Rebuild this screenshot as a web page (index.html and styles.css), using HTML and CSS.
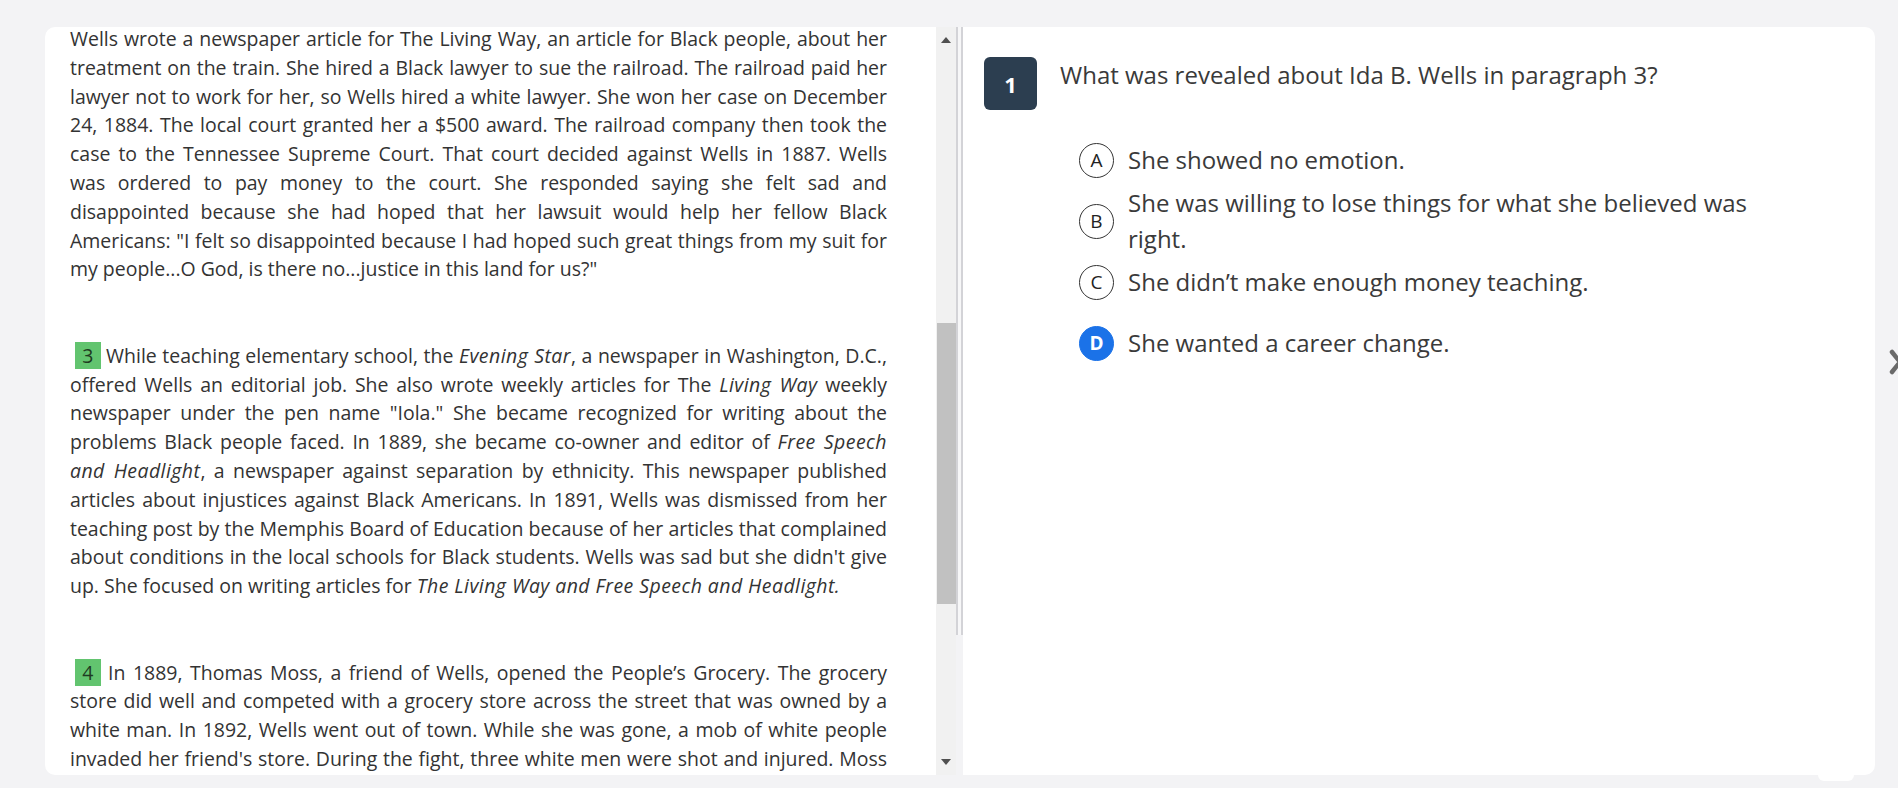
FILE: index.html
```html
<!DOCTYPE html>
<html lang="en">
<head>
<meta charset="utf-8">
<title>Reading question</title>
<link rel="stylesheet" href="styles.css">
</head>
<body>
<div class="app">
  <section class="passage-panel">
    <div class="passage-scroll">
      <div class="passage-content">
        <p class="para">Wells wrote a newspaper article for The Living Way, an article for Black people, about her treatment on the train. She hired a Black lawyer to sue the railroad. The railroad paid her lawyer not to work for her, so Wells hired a white lawyer. She won her case on December 24, 1884. The local court granted her a $500 award. The railroad company then took the case to the Tennessee Supreme Court. That court decided against Wells in 1887. Wells was ordered to pay money to the court. She responded saying she felt sad and disappointed because she had hoped that her lawsuit would help her fellow Black Americans: "I felt so disappointed because I had hoped such great things from my suit for my people...O God, is there no...justice in this land for us?"</p>
        <p class="para"><span class="pnum">3</span> While teaching elementary school, the <em>Evening Star</em>, a newspaper in Washington, D.C., offered Wells an editorial job. She also wrote weekly articles for The <em>Living Way</em> weekly newspaper under the pen name "Iola." She became recognized for writing about the problems Black people faced. In 1889, she became co-owner and editor of <em>Free Speech and Headlight</em>, a newspaper against separation by ethnicity. This newspaper published articles about injustices against Black Americans. In 1891, Wells was dismissed from her teaching post by the Memphis Board of Education because of her articles that complained about conditions in the local schools for Black students. Wells was sad but she didn't give up. She focused on writing articles for <em>The Living Way and Free Speech and Headlight.</em></p>
        <p class="para"><span class="pnum">4</span> In 1889, Thomas Moss, a friend of Wells, opened the People’s Grocery. The grocery store did well and competed with a grocery store across the street that was owned by a white man. In 1892, Wells went out of town. While she was gone, a mob of white people invaded her friend's store. During the fight, three white men were shot and injured. Moss and two other Black men were arrested and taken to jail.</p>
      </div>
    </div>
    <div class="scrollbar">
      <div class="sb-btn"><span class="tri-up"></span></div>
      <div class="sb-track"><div class="sb-thumb"></div></div>
      <div class="sb-btn"><span class="tri-down"></span></div>
    </div>
  </section>
  <div class="divider"></div>
  <div class="question-col">
    <section class="question-panel">
      <div class="question-row">
        <div class="qnum">1</div>
        <div class="qtext">What was revealed about Ida B. Wells in paragraph 3?</div>
      </div>
      <ul class="options">
        <li class="option"><span class="letter">A</span><span class="otext">She showed no emotion.</span></li>
        <li class="option"><span class="letter">B</span><span class="otext">She was willing to lose things for what she believed was right.</span></li>
        <li class="option"><span class="letter">C</span><span class="otext">She didn’t make enough money teaching.</span></li>
        <li class="option selected"><span class="letter">D</span><span class="otext">She wanted a career change.</span></li>
      </ul>
    </section>
    <div class="panel-tab"></div>
  </div>
  <div class="nav-col">
    <svg class="chev" width="14" height="26" viewBox="0 0 14 26"><polyline points="3,3 11,13 3,23" fill="none" stroke="#6a6a6a" stroke-width="4.5" stroke-linecap="round" stroke-linejoin="round"/></svg>
  </div>
</div>
</body>
</html>
```
FILE: styles.css
```css
* { box-sizing: border-box; }
html, body { margin: 0; padding: 0; }
body {
  background: #f3f3f5;
  width: 1898px;
  height: 788px;
  overflow: hidden;
  font-family: "Open Sans", "Noto Sans", sans-serif;
  color: #333;
}
.app {
  display: flex;
  align-items: flex-start;
  height: 788px;
  padding: 27px 0 0 45px;
}
.passage-panel {
  width: 911px;
  height: 748px;
  background: #fff;
  border-radius: 10px 0 0 10px;
  display: flex;
  overflow: hidden;
  flex: none;
}
.passage-scroll {
  flex: 1;
  height: 100%;
  overflow: hidden;
  padding: 0 49px 0 25px;
}
.passage-content { margin-top: -2px; }
.para {
  margin: 0 0 57.6px;
  font-size: 19.48px;
  line-height: 28.8px;
  text-align: justify;
  color: #333;
}
.para em {
  font-style: italic;
  letter-spacing: 0.44px;
}
.pnum {
  background: #62c46f;
  color: #1f3b22;
  padding: 0 7.2px;
  margin-left: 5px;
}
.scrollbar {
  width: 20px;
  height: 100%;
  background: #f1f1f1;
  display: flex;
  flex-direction: column;
  flex: none;
}
.sb-btn {
  height: 26px;
  display: flex;
  align-items: center;
  justify-content: center;
  flex: none;
}
.tri-up, .tri-down {
  width: 0; height: 0;
  border-left: 5px solid transparent;
  border-right: 5px solid transparent;
}
.tri-up { border-bottom: 6px solid #505050; }
.tri-down { border-top: 6px solid #505050; }
.sb-track { flex: 1; }
.sb-thumb {
  margin-top: 270px;
  height: 281px;
  background: #c1c1c1;
  margin-left: 1px;
}
.divider {
  width: 7px;
  height: 608px;
  border-left: 2px solid #d3d3d7;
  border-right: 2px solid #d3d3d7;
  background: #f7f7f8;
  flex: none;
}
.question-col {
  width: 912px;
  display: flex;
  flex-direction: column;
  flex: none;
}
.question-panel {
  height: 748px;
  background: #fff;
  border-radius: 0 10px 10px 0;
  padding: 30px 0 0 21px;
}
.panel-tab {
  width: 36px;
  height: 6px;
  background: #fff;
  border-radius: 0 0 6px 6px;
  margin: 0 21px 0 auto;
}
.question-row {
  display: flex;
  align-items: flex-start;
  gap: 23px;
}
.qnum {
  width: 53px;
  height: 53px;
  border-radius: 6px;
  background: #2c3e50;
  color: #fff;
  font-weight: 700;
  font-size: 22px;
  display: flex;
  align-items: center;
  justify-content: center;
  flex: none;
}
.qtext {
  font-size: 24px;
  line-height: 36px;
  color: #3a3a3a;
}
.options {
  list-style: none;
  margin: 32px 0 0 95px;
  padding: 0;
  display: flex;
  flex-direction: column;
  gap: 7px;
}
.option {
  display: flex;
  align-items: center;
  gap: 14px;
}
.option.selected { margin-top: 18px; }
.letter {
  width: 35px;
  height: 35px;
  border: 1.5px solid #333;
  border-radius: 50%;
  display: flex;
  align-items: center;
  justify-content: center;
  font-size: 19px;
  color: #222;
  flex: none;
}
.selected .letter {
  background: #1b72e8;
  border-color: #1b72e8;
  color: #fff;
  font-weight: 700;
}
.otext {
  font-size: 24px;
  line-height: 36px;
  color: #3a3a3a;
  max-width: 640px;
}
.nav-col {
  width: 23px;
  height: 748px;
  overflow: hidden;
  flex: none;
}
.chev {
  display: block;
  margin: 322px 0 0 14px;
}
```
